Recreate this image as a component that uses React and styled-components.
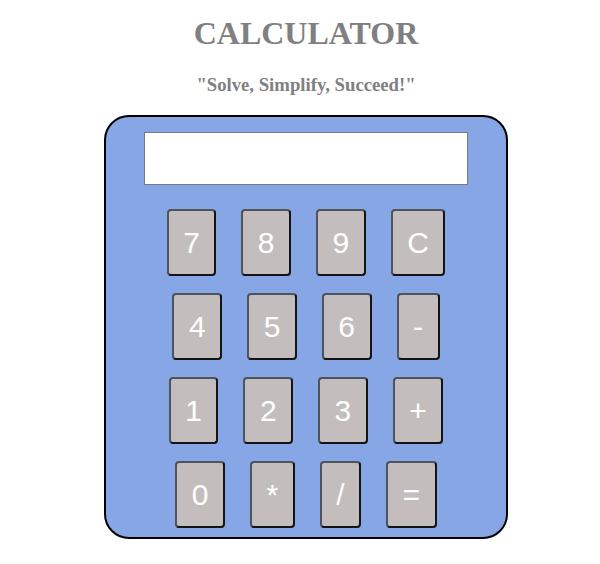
import React from "react";
import styled, { createGlobalStyle } from "styled-components";

const Global = createGlobalStyle`
  html, body { margin: 0; padding: 0; background: #ffffff; }
  body { font-family: "Liberation Serif", "Times New Roman", serif; }
`;

const Page = styled.div`
  box-sizing: border-box;
  display: flex;
  flex-direction: column;
  align-items: center;
  width: 600px;
  padding: 15px 0 0 12px;
`;

const Title = styled.h1`
  margin: 0 0 22px;
  font-family: "Liberation Serif", serif;
  font-size: 32px;
  font-weight: bold;
  line-height: 37px;
  color: #808080;
  text-align: center;
`;

const Tagline = styled.h3`
  margin: 0 0 19px;
  font-family: "Liberation Serif", serif;
  font-size: 18.72px;
  font-weight: bold;
  line-height: 21.5px;
  color: #808080;
  text-align: center;
`;

const Body = styled.div`
  box-sizing: border-box;
  width: 404px;
  height: 424px;
  background: #87a6e6;
  border: 2px solid #000;
  border-radius: 25px;
  padding: 15px 0 9px;
  display: flex;
  flex-direction: column;
  align-items: center;
`;

const Display = styled.input`
  box-sizing: border-box;
  width: 324px;
  height: 53px;
  margin: 0 0 24px;
  border: 1px solid #777a80;
  background: #ffffff;
  padding: 0 8px;
  font-family: "Liberation Sans", Arial, sans-serif;
  font-size: 28px;
  outline: none;
`;

const Keys = styled.div`
  display: flex;
  flex-direction: column;
  gap: 17px;
`;

const Row = styled.div`
  display: flex;
  justify-content: center;
  gap: 25px;
`;

const Key = styled.button`
  box-sizing: border-box;
  height: 67px;
  padding: 14px 14.5px;
  background: #c4bdbd;
  border: 2px solid;
  border-color: #4e535c #141414 #141414 #4e535c;
  border-radius: 4px;
  color: #ffffff;
  font-family: "Liberation Sans", Arial, sans-serif;
  font-size: 30px;
  line-height: 35px;
  cursor: pointer;
`;

const rows = [
  ["7", "8", "9", "C"],
  ["4", "5", "6", "-"],
  ["1", "2", "3", "+"],
  ["0", "*", "/", "="],
];

export default function App() {
  return (
    <>
      <Global />
      <Page>
        <Title>CALCULATOR</Title>
        <Tagline>"Solve, Simplify, Succeed!"</Tagline>
        <Body>
          <Display type="text" readOnly />
          <Keys>
            {rows.map((r, i) => (
              <Row key={i}>
                {r.map((k) => (
                  <Key key={k}>{k}</Key>
                ))}
              </Row>
            ))}
          </Keys>
        </Body>
      </Page>
    </>
  );
}
